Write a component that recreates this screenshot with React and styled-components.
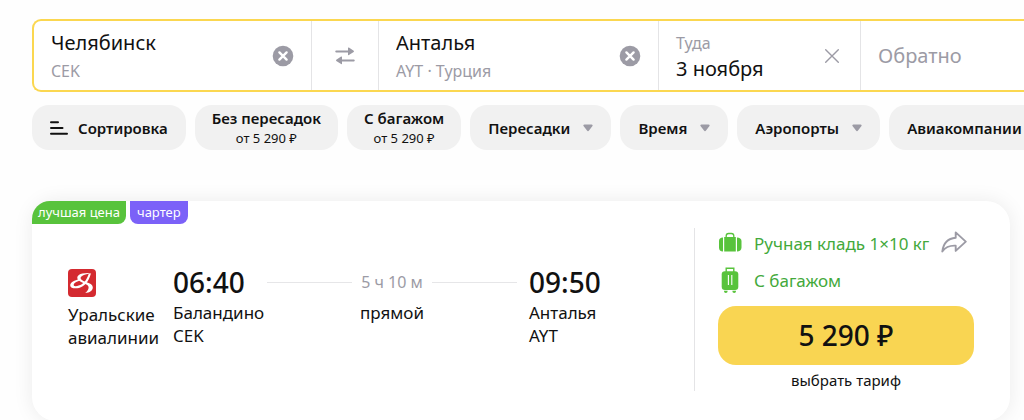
import styled, { createGlobalStyle } from "styled-components";

const App = () => {
  return (
    <Page>
      <GlobalStyle />
      <SearchForm aria-label="Поиск авиабилетов">
        <Field>
          <FieldText>
            <FieldInput aria-label="Откуда" defaultValue="Челябинск" />
            <FieldHint>CEK</FieldHint>
          </FieldText>
          <IconButton type="button" aria-label="Очистить город вылета">
            <ClearIcon />
          </IconButton>
        </Field>
        <SwapButton type="button" aria-label="Поменять города местами">
          <SwapIcon />
        </SwapButton>
        <Field>
          <FieldText>
            <FieldInput aria-label="Куда" defaultValue="Анталья" />
            <FieldHint>AYT · Турция</FieldHint>
          </FieldText>
          <IconButton type="button" aria-label="Очистить город прилёта">
            <ClearIcon />
          </IconButton>
        </Field>
        <Field>
          <FieldText>
            <FieldLabel htmlFor="date-there">Туда</FieldLabel>
            <FieldInput id="date-there" defaultValue="3 ноября" />
          </FieldText>
          <IconButton type="button" aria-label="Сбросить дату">
            <CrossIcon />
          </IconButton>
        </Field>
        <Field>
          <FieldInput aria-label="Обратно" placeholder="Обратно" />
        </Field>
      </SearchForm>

      <Filters>
        <FilterButton type="button" $gap="10px">
          <SortIcon />
          Сортировка
        </FilterButton>
        <QuickFilter type="button">
          Без пересадок
          <FilterPrice>от 5 290 ₽</FilterPrice>
        </QuickFilter>
        <QuickFilter type="button">
          С багажом
          <FilterPrice>от 5 290 ₽</FilterPrice>
        </QuickFilter>
        {["Пересадки", "Время", "Аэропорты", "Авиакомпании"].map((name) => (
          <FilterButton type="button" key={name}>
            {name}
            <ArrowIcon />
          </FilterButton>
        ))}
      </Filters>

      <Ticket>
        <Badges>
          <Badge $color="#58c33c" $first>
            лучшая цена
          </Badge>
          <Badge $color="#7b61f8">чартер</Badge>
        </Badges>
        <TicketBody>
          <Flight>
            <Carrier>
              <CarrierLogo />
              <CarrierName>Уральские авиалинии</CarrierName>
            </Carrier>
            <Departure>
              <Time>06:40</Time>
              <Place>Баландино</Place>
              <Place>CEK</Place>
            </Departure>
            <Route>
              <Duration>5 ч 10 м</Duration>
              <Place>прямой</Place>
            </Route>
            <Arrival>
              <Time>09:50</Time>
              <Place>Анталья</Place>
              <Place>AYT</Place>
            </Arrival>
          </Flight>
          <Offer>
            <Baggage>
              <CabinBagIcon />
              <BaggageText>Ручная кладь 1×10 кг</BaggageText>
              <ShareButton type="button" aria-label="Поделиться">
                <ShareIcon />
              </ShareButton>
            </Baggage>
            <Baggage>
              <SuitcaseIcon />
              <BaggageText>С багажом</BaggageText>
            </Baggage>
            <PriceButton type="button">5 290 ₽</PriceButton>
            <PriceCaption>выбрать тариф</PriceCaption>
          </Offer>
        </TicketBody>
      </Ticket>
    </Page>
  );
};

const ClearIcon = () => (
  <svg width="22" height="22" viewBox="0 0 22 22">
    <circle cx="11" cy="11" r="10.3" fill="#9c9ba5" />
    <path
      d="M7.4 7.4l7.2 7.2M14.6 7.4l-7.2 7.2"
      stroke="#fff"
      strokeWidth="2.4"
      strokeLinecap="round"
    />
  </svg>
);

const CrossIcon = () => (
  <svg width="22" height="22" viewBox="0 0 22 22">
    <path
      d="M4.7 4.7l12.6 12.6M17.3 4.7L4.7 17.3"
      stroke="#9c9ba5"
      strokeWidth="1.4"
      strokeLinecap="round"
    />
  </svg>
);

const SwapIcon = () => (
  <svg width="20" height="18" viewBox="0 0 20 18" fill="#9c9ba5">
    <path d="M1 3.5h12V1c0-.5.5-.7.9-.4l4.8 3.2c.4.3.4.8 0 1.1l-4.8 3.2c-.4.3-.9.1-.9-.4V5.500H1.600a1 1 0 0 1-.6-2z" />
    <path d="M19 12.5H7V10c0-.5-.5-.7-.9-.4l-4.8 3.2c-.4.3-.4.8 0 1.1l4.8 3.2c.4.3.9.1.9-.4v-2.200h11.400a1 1 0 0 0 .6-2z" />
  </svg>
);

const SortIcon = () => (
  <svg width="18" height="14" viewBox="0 0 18 14">
    <path
      d="M1 1.200h7M1 7h11.500M1 12.800h16"
      stroke="#111"
      strokeWidth="2"
      strokeLinecap="round"
    />
  </svg>
);

const ArrowIcon = () => (
  <svg width="10" height="8" viewBox="0 0 10 8">
    <path
      d="M1.500.5h7c1.100 0 1.500 1 .8 1.800L6 6.600c-.6.8-1.400.8-2 0L.7 2.300C0 1.500.4.5 1.500.5z"
      fill="#9c9ba5"
    />
  </svg>
);

const CarrierLogo = () => (
  <svg width="28" height="28" viewBox="0 0 28 28">
    <rect width="28" height="28" rx="4" fill="#d42a30" />
    <path
      d="M23.500 4.200C18.500 3.600 12.500 4.300 10.300 6.400c-2 2-.8 4.400 2 6 2.300 1.300 5.200 2.200 7 3.700 1.900 1.600 1.500 3.500.4 5.200-.6 1-1.500 1.900-2.500 2.700 4.600-.2 7.600-2.400 7.600-5.400 0-3.200-3.200-4.300-6.800-5.600-3-1.100-5.300-2.200-5.400-3.800-.1-2.500 5.200-4.200 10.900-5z"
      fill="#fff"
    />
    <path
      d="M11.500 10.200C6.500 11 2.200 13.400 2.200 16.200c0 3 4.600 3.800 8.800 2.700 5.200-1.400 9.600-5.500 11.900-14.300l-2.200.3c-2.200 6.500-5.500 10.200-10 11.700-2.700.9-5 .8-5-.6 0-1.800 3.100-3.700 7.300-4.700z"
      fill="#fff"
    />
  </svg>
);

const CabinBagIcon = () => (
  <svg width="24" height="24" viewBox="0 0 24 24" fill="#58c33c">
    <path
      d="M8.200 6V4.800c0-1.400 1-2.300 2.400-2.300h2.800c1.400 0 2.400.9 2.400 2.300V6"
      fill="none"
      stroke="#58c33c"
      strokeWidth="1.300"
    />
    <path d="M5 6.400v14.200C2.400 20.600 1 19 1 16.600V10c0-2.300 1.400-3.600 4-3.600zM19 6.400v14.200c2.600 0 4.500-1.600 4.500-4V10c0-2.300-1.900-3.600-4.500-3.600zM6.200 6h11.600v14.600H6.200z" />
  </svg>
);

const SuitcaseIcon = () => (
  <svg width="24" height="28" viewBox="0 0 24 28">
    <path
      d="M8.200 6V2.200h7.600V6"
      fill="none"
      stroke="#58c33c"
      strokeWidth="1.400"
    />
    <rect x="3.700" y="5.200" width="16.600" height="18.800" rx="3.200" fill="#58c33c" />
    <path d="M10.400 9v10M13.800 9v10" stroke="#fff" strokeWidth="1.100" />
    <path d="M6 24.800h3.600v.4a1.800 1.800 0 0 1-3.600 0zM14.400 24.800H18v.4a1.800 1.800 0 0 1-3.600 0z" fill="#58c33c" />
  </svg>
);

const ShareIcon = () => (
  <svg width="26" height="22" viewBox="0 0 26 22">
    <path
      d="M14.700 1.400L24.800 10.600l-10.100 9.300v-5.200C8.500 14.300 4.600 16 1.300 20.500 2.300 12.300 7.300 7.300 14.700 6.700z"
      fill="none"
      stroke="#9c9ba5"
      strokeWidth="1.900"
      strokeLinejoin="round"
    />
  </svg>
);

const GlobalStyle = createGlobalStyle`
  * {
    box-sizing: border-box;
  }

  body {
    margin: 0;
    background: #fefefe;
    color: #111;
    font-family: "Noto Sans", "Open Sans", sans-serif;
  }

  button,
  input {
    font-family: inherit;
    color: inherit;
  }

  svg {
    display: block;
    flex: none;
  }
`;

const Page = styled.main`
  padding: 19px 0 0 32px;
  overflow: hidden;
`;

const SearchForm = styled.form`
  display: grid;
  grid-template-columns: 278fr 67px 280fr 202fr 163fr;
  height: 73px;
  border: 2px solid #fbd750;
  border-right: none;
  border-radius: 9px 0 0 9px;
  background: #fff;
`;

const Field = styled.div`
  display: flex;
  align-items: center;
  min-width: 0;
  padding: 0 17px;
  border-right: 1px solid #e4e4e6;

  &:last-child {
    border-right: none;
  }
`;

const FieldText = styled.div`
  display: flex;
  flex: 1;
  flex-direction: column;
  min-width: 0;
`;

const FieldInput = styled.input`
  width: 100%;
  height: 26px;
  padding: 0;
  border: none;
  outline: none;
  background: none;
  font-size: 20px;

  &::placeholder {
    color: #9c9ba5;
    opacity: 1;
  }
`;

const FieldHint = styled.span`
  margin-top: 4px;
  color: #9c9ba5;
  font-size: 16px;
  line-height: 22px;
`;

const FieldLabel = styled.label`
  color: #9c9ba5;
  font-size: 16px;
  line-height: 26px;
`;

const IconButton = styled.button`
  padding: 0;
  border: none;
  background: none;
  cursor: pointer;
`;

const SwapButton = styled(IconButton)`
  display: flex;
  align-items: center;
  justify-content: center;
  border-right: 1px solid #e4e4e6;
`;

const Filters = styled.div`
  display: flex;
  gap: 9px;
  margin-top: 13px;
`;

const FilterButton = styled.button`
  display: flex;
  flex: none;
  align-items: center;
  gap: ${({ $gap }) => $gap || "13px"};
  height: 45px;
  padding: 0 18px;
  border: none;
  border-radius: 17px;
  background: #f1f1f1;
  font-size: 15px;
  font-weight: 600;
  line-height: 20px;
  white-space: nowrap;
  cursor: pointer;
`;

const QuickFilter = styled(FilterButton)`
  flex-direction: column;
  justify-content: center;
  gap: 0;
  padding: 0 17px;
`;

const FilterPrice = styled.span`
  font-size: 13px;
  font-weight: 400;
`;

const Ticket = styled.article`
  margin: 51px 14px 0 0;
  border-radius: 24px;
  background: #fff;
  box-shadow: 0 0 20px rgba(0, 0, 0, 0.08);
`;

const Badges = styled.div`
  display: flex;
  gap: 4px;
`;

const Badge = styled.span`
  height: 23px;
  padding: ${({ $first }) => ($first ? "0 6px" : "0 7px")};
  border-radius: ${({ $first }) => ($first ? "18px 0 8px 0" : "0 0 8px 8px")};
  background: ${({ $color }) => $color};
  color: #fff;
  font-size: 13px;
  line-height: 22px;
`;

const TicketBody = styled.div`
  display: flex;
  padding: 4px 0 30px;
`;

const Flight = styled.div`
  display: flex;
  flex: 1;
  padding: 36px 0 0 36px;
`;

const Carrier = styled.div`
  width: 105px;
  padding-top: 5px;
`;

const CarrierName = styled.div`
  margin-top: 6px;
  font-size: 17px;
  line-height: 23px;
`;

const Departure = styled.div`
  width: 94px;
`;

const Arrival = styled.div`
  width: 165px;
`;

const Time = styled.div`
  font-size: 28px;
  font-weight: 500;
  line-height: 37px;
`;

const Place = styled.div`
  font-size: 17px;
  line-height: 23px;
`;

const Route = styled.div`
  flex: 1;
  padding-right: 12px;
  text-align: center;
`;

const Duration = styled.div`
  display: flex;
  align-items: center;
  gap: 9px;
  color: #9c9ba5;
  font-size: 16px;
  line-height: 37px;

  &::before,
  &::after {
    content: "";
    flex: 1;
    height: 1px;
    background: #e6e6e8;
  }
`;

const Offer = styled.div`
  display: flex;
  flex-direction: column;
  width: 316px;
  padding: 0 36px 0 23px;
  border-left: 1px solid #e4e4e6;
`;

const Baggage = styled.div`
  display: flex;
  align-items: center;
  gap: 12px;
  height: 30px;
  color: #43a93b;

  & + & {
    margin-top: 7px;
  }
`;

const BaggageText = styled.span`
  font-size: 17px;
  white-space: nowrap;
`;

const ShareButton = styled(IconButton)`
  margin-bottom: 2px;
`;

const PriceButton = styled.button`
  height: 59px;
  margin-top: 11px;
  padding: 0 0 2px;
  border: none;
  border-radius: 18px;
  background: #f9d552;
  font-size: 28px;
  font-weight: 500;
  cursor: pointer;
`;

const PriceCaption = styled.div`
  margin-top: 4px;
  font-size: 15px;
  line-height: 22px;
  text-align: center;
`;

export default App;
